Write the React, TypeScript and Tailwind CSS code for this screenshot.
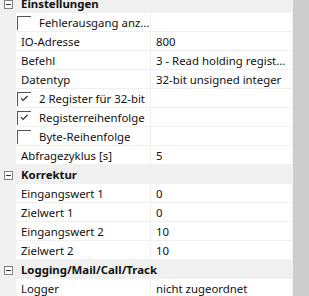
import React from "react";

type Row =
  | { kind: "cat"; label: string }
  | { kind: "prop"; label: string; value?: string; check?: boolean | null };

const rows: Row[] = [
  { kind: "cat", label: "Einstellungen" },
  { kind: "prop", label: "Fehlerausgang anz...", check: false },
  { kind: "prop", label: "IO-Adresse", value: "800" },
  { kind: "prop", label: "Befehl", value: "3 - Read holding regist..." },
  { kind: "prop", label: "Datentyp", value: "32-bit unsigned integer" },
  { kind: "prop", label: "2 Register für 32-bit", check: true },
  { kind: "prop", label: "Registerreihenfolge", check: true },
  { kind: "prop", label: "Byte-Reihenfolge", check: false },
  { kind: "prop", label: "Abfragezyklus [s]", value: "5" },
  { kind: "cat", label: "Korrektur" },
  { kind: "prop", label: "Eingangswert 1", value: "0" },
  { kind: "prop", label: "Zielwert 1", value: "0" },
  { kind: "prop", label: "Eingangswert 2", value: "10" },
  { kind: "prop", label: "Zielwert 2", value: "10" },
  { kind: "cat", label: "Logging/Mail/Call/Track" },
  { kind: "prop", label: "Logger", value: "nicht zugeordnet" },
];

function MinusBox() {
  return (
    <svg width="9" height="9" viewBox="0 0 9 9" className="block">
      <rect x="0.5" y="0.5" width="8" height="8" fill="white" stroke="#808080" />
      <line x1="2" y1="4.5" x2="7" y2="4.5" stroke="#333" />
    </svg>
  );
}

function CheckBox({ checked }: { checked: boolean }) {
  return (
    <svg width="14" height="14" viewBox="0 0 14 14" className="block">
      <rect x="0" y="0" width="14" height="14" fill="white" />
      <line x1="0.5" y1="0" x2="0.5" y2="14" stroke="#555" />
      <line x1="0" y1="0.5" x2="14" y2="0.5" stroke="#555" />
      {checked && (
        <polyline points="4,6 6,8.5 10.5,4" fill="none" stroke="#222" strokeWidth="1.1" />
      )}
    </svg>
  );
}

export default function App() {
  return (
    <div
      className="w-[309px] h-[296px] overflow-hidden bg-white flex text-[11.4px] text-[#111]"
      style={{ fontFamily: '"Noto Sans", "Open Sans", sans-serif' }}
    >
      <div className="flex-1 flex flex-col mt-[-6px]">
        {rows.map((r, i) =>
          r.kind === "cat" ? (
            <div
              key={i}
              className="h-[19px] shrink-0 bg-[#f0f0f0] border-b border-[#f0f0f0] flex items-center"
            >
              <div className="w-[16px] flex justify-center pl-[1px] mt-[2px]">
                <MinusBox />
              </div>
              <span className="pl-[5px] font-bold leading-none mt-[2px]">{r.label}</span>
            </div>
          ) : (
            <div key={i} className="h-[19px] shrink-0 flex">
              <div className="w-[16px] bg-[#f0f0f0]" />
              <div className="w-[135px] border-b border-r border-[#f0f0f0] flex items-center">
                {r.check !== undefined && r.check !== null ? (
                  <>
                    <div className="pl-[1px] mt-[1px]">
                      <CheckBox checked={!!r.check} />
                    </div>
                    <span className="pl-[8px] whitespace-nowrap leading-none mt-[1px]">{r.label}</span>
                  </>
                ) : (
                  <span className="pl-[5px] whitespace-nowrap leading-none mt-[1px]">{r.label}</span>
                )}
              </div>
              <div className="flex-1 border-b border-[#f0f0f0] flex items-center">
                <span className="pl-[5px] whitespace-nowrap leading-none mt-[1px]">{r.value ?? ""}</span>
              </div>
            </div>
          )
        )}
      </div>
      <div className="w-[17px] bg-[#f0f0f0] pl-px">
        <div className="h-full bg-[#cdcdcd]" />
      </div>
    </div>
  );
}
